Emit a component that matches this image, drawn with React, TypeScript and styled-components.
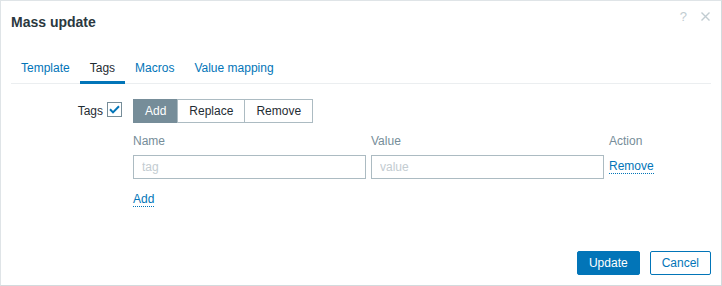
import React from 'react';
import styled, { createGlobalStyle } from 'styled-components';

const GlobalStyle = createGlobalStyle`
  html, body {
    margin: 0;
    padding: 0;
    background: #ffffff;
  }
  body {
    font-family: "Liberation Sans", Arial, sans-serif;
    font-size: 12px;
    color: #1f2c33;
  }
`;

const Dialog = styled.div`
  box-sizing: border-box;
  width: 722px;
  height: 286px;
  display: flex;
  flex-direction: column;
  border: 1px solid #dfe4e7;
  border-right-color: #d3dadd;
  border-bottom-color: #d3dadd;
  background: #ffffff;
`;

const Header = styled.div`
  display: flex;
  align-items: flex-start;
  justify-content: space-between;
  padding: 13px 10px 0 10px;
`;

const Title = styled.h4`
  margin: 0;
  font-size: 14px;
  line-height: 16px;
  font-weight: bold;
  color: #2b3840;
`;

const HeaderIcons = styled.div`
  display: flex;
  align-items: center;
  gap: 14px;
  margin-top: -4px;
  margin-right: 1px;
  color: #c1ccd1;
`;

const HelpMark = styled.span`
  font-size: 13px;
  line-height: 13px;
`;

const Body = styled.div`
  flex: 1;
  padding: 0 10px;
  margin-top: 24px;
`;

const TabList = styled.ul`
  display: flex;
  margin: 0;
  padding: 0;
  list-style: none;
  border-bottom: 1px solid #ebeef0;
`;

const Tab = styled.li<{ $active?: boolean }>`
  padding: 7px 10px 6px;
  line-height: 14px;
  margin-bottom: -1px;
  border-bottom: 3px solid ${(p) => (p.$active ? '#0275b8' : 'transparent')};
  color: ${(p) => (p.$active ? '#1f2c33' : '#0275b8')};
`;

const FormGrid = styled.div`
  display: grid;
  grid-template-columns: 111px 1fr;
  column-gap: 11px;
  row-gap: 10px;
  padding-top: 15px;
`;

const FieldLabel = styled.label`
  display: flex;
  align-items: center;
  justify-content: flex-end;
  gap: 4px;
  height: 24px;
`;

const CheckBox = styled.span`
  box-sizing: border-box;
  display: inline-flex;
  align-items: center;
  justify-content: center;
  width: 15px;
  height: 15px;
  margin-top: -3px;
  border: 1px solid #768d99;
  background: #ffffff;
`;

const Segmented = styled.div`
  display: flex;
`;

const SegButton = styled.span<{ $checked?: boolean }>`
  box-sizing: border-box;
  height: 24px;
  line-height: 22px;
  padding: 0 11px;
  border: 1px solid ${(p) => (p.$checked ? '#768d99' : '#acbbc2')};
  background: ${(p) => (p.$checked ? '#768d99' : '#ffffff')};
  color: ${(p) => (p.$checked ? '#ffffff' : '#1f2c33')};
  & + & {
    margin-left: -1px;
  }
`;

const TagTable = styled.div`
  display: grid;
  grid-template-columns: 233px 233px auto;
  column-gap: 5px;
  align-items: center;
`;

const HeadCell = styled.div`
  line-height: 14px;
  padding: 1px 0 7px;
  color: #768d99;
`;

const TextInput = styled.input`
  box-sizing: border-box;
  width: 100%;
  height: 24px;
  margin: 0;
  padding: 0 8px;
  border: 1px solid #acbbc2;
  border-radius: 0;
  font-family: inherit;
  font-size: 12px;
  color: #1f2c33;
  background: #ffffff;
  outline: none;
  &::placeholder {
    color: #c3ccd1;
  }
`;

const LinkAction = styled.span`
  justify-self: start;
  line-height: 14px;
  margin-top: -2px;
  color: #0275b8;
  border-bottom: 1px dotted #0275b8;
`;

const AddRow = styled.div`
  grid-column: 1 / -1;
  padding-top: 15px;
  display: flex;
`;

const Footer = styled.div`
  display: flex;
  justify-content: flex-end;
  gap: 10px;
  padding: 0 10px 10px;
`;

const Button = styled.button<{ $primary?: boolean }>`
  box-sizing: border-box;
  height: 24px;
  padding: 0 11px;
  margin: 0;
  border: 1px solid #0275b8;
  border-radius: 2px;
  font-family: inherit;
  font-size: 12px;
  line-height: 22px;
  background: ${(p) => (p.$primary ? '#0275b8' : '#ffffff')};
  color: ${(p) => (p.$primary ? '#ffffff' : '#0275b8')};
`;

const App: React.FC = () => {
  const tabs = ['Template', 'Tags', 'Macros', 'Value mapping'];

  return (
    <>
      <GlobalStyle />
      <Dialog>
        <Header>
          <Title>Mass update</Title>
          <HeaderIcons>
            <HelpMark>?</HelpMark>
            <svg width="9" height="9" viewBox="0 0 9 9">
              <path d="M0.5 0.5 L8.5 8.5 M8.5 0.5 L0.5 8.5" stroke="#c1ccd1" strokeWidth="1.4" />
            </svg>
          </HeaderIcons>
        </Header>

        <Body>
          <TabList>
            {tabs.map((t) => (
              <Tab key={t} $active={t === 'Tags'}>
                {t}
              </Tab>
            ))}
          </TabList>

          <FormGrid>
            <FieldLabel>
              Tags
              <CheckBox>
                <svg width="11" height="9" viewBox="0 0 11 9">
                  <path d="M1 4.3 L4 7.4 L10 1.2" fill="none" stroke="#0275b8" strokeWidth="2" />
                </svg>
              </CheckBox>
            </FieldLabel>
            <Segmented>
              <SegButton $checked>Add</SegButton>
              <SegButton>Replace</SegButton>
              <SegButton>Remove</SegButton>
            </Segmented>

            <div />
            <TagTable>
              <HeadCell>Name</HeadCell>
              <HeadCell>Value</HeadCell>
              <HeadCell>Action</HeadCell>
              <TextInput placeholder="tag" />
              <TextInput placeholder="value" />
              <LinkAction>Remove</LinkAction>
              <AddRow>
                <LinkAction>Add</LinkAction>
              </AddRow>
            </TagTable>
          </FormGrid>
        </Body>

        <Footer>
          <Button $primary>Update</Button>
          <Button>Cancel</Button>
        </Footer>
      </Dialog>
    </>
  );
};

export default App;
